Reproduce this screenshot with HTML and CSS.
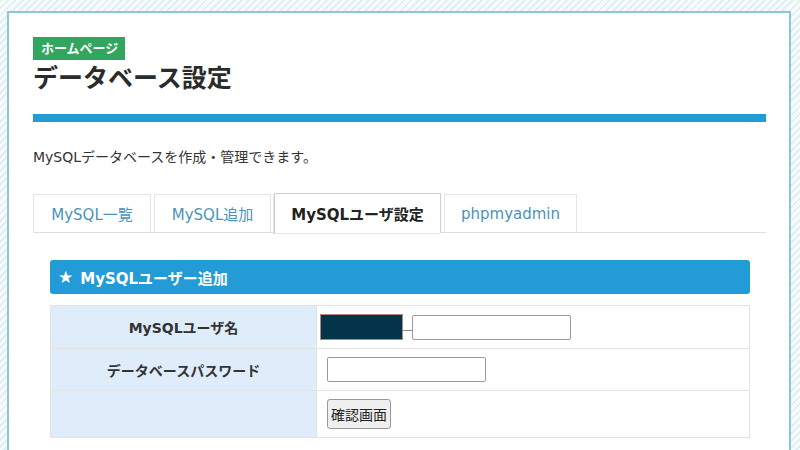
FILE: index.html
```html
<!DOCTYPE html>
<html lang="ja">
<head>
  <meta charset="UTF-8">
  <meta name="viewport" content="width=device-width, initial-scale=1.0">
  <title>データベース設定</title>
  <link rel="stylesheet" href="styles.css">
</head>
<body>
  <div class="page-panel">
    <header class="page-header">
      <span class="crumb-badge">ホームページ</span>
      <h1 class="page-title">データベース設定</h1>
      <div class="title-rule"></div>
    </header>

    <p class="page-lead">MySQLデータベースを作成・管理できます。</p>

    <!-- Tabs -->
    <nav class="tab-bar">
      <a class="tab-item tab-list" href="#">MySQL一覧</a>
      <a class="tab-item tab-add" href="#">MySQL追加</a>
      <a class="tab-item tab-user is-active" href="#">MySQLユーザ設定</a>
      <a class="tab-item tab-pma" href="#">phpmyadmin</a>
    </nav>

    <section class="form-section">
      <h2 class="section-heading"><span class="section-star">★</span>MySQLユーザー追加</h2>

      <table class="form-table">
        <tr class="row-user">
          <th>MySQLユーザ名</th>
          <td>
            <div class="user-field">
              <span class="user-prefix"></span>
              <span class="user-join"></span>
              <input type="text" class="text-input">
            </div>
          </td>
        </tr>
        <tr class="row-pass">
          <th>データベースパスワード</th>
          <td><input type="password" class="text-input pass-input"></td>
        </tr>
        <tr class="row-submit">
          <th></th>
          <td><button type="button" class="confirm-button">確認画面</button></td>
        </tr>
      </table>
    </section>
  </div>
</body>
</html>
```

FILE: styles.css
```css
:root {
  --color-blue: #229bd6;
  --color-green: #32a55e;
  --color-text: #333333;
  --color-link: #4b93b8;
  --color-border: #dddddd;
  --color-label-bg: #deedf9;
  --font-main: "DejaVu Sans", "Noto Sans CJK JP", sans-serif;
}

* {
  box-sizing: border-box;
  margin: 0;
  padding: 0;
}

body {
  font-family: var(--font-main);
  color: var(--color-text);
  height: 450px;
  overflow: hidden;
  padding: 11px 9px 0 7px;
  background-color: #ffffff;
  background-image: repeating-linear-gradient(135deg, #e0eef5 0 2px, #f7fbfd 2px 5px);
}

/* White content panel */
.page-panel {
  background: #ffffff;
  border: 2px solid #8fc6d7;
  border-bottom: none;
  height: 100%;
  padding: 24px 23px 0 24px;
}

/* Header */
.page-header {
  display: flex;
  flex-direction: column;
  align-items: flex-start;
}

.crumb-badge {
  display: inline-block;
  height: 23px;
  line-height: 23px;
  padding: 0 7px 0 8px;
  background: var(--color-green);
  color: #ffffff;
  font-size: 13px;
  font-weight: bold;
}

.page-title {
  margin-top: 2px;
  font-size: 25px;
  line-height: 34px;
  font-weight: bold;
  color: #2b2b2b;
}

.title-rule {
  align-self: stretch;
  height: 8px;
  margin-top: 18px;
  background: var(--color-blue);
}

.page-lead {
  margin-top: 27px;
  font-size: 14px;
  line-height: 16px;
}

/* Tabs */
.tab-bar {
  display: flex;
  align-items: flex-end;
  gap: 3px;
  margin-top: 29px;
  height: 39px;
  border-bottom: 1px solid #e0e0e0;
}

.tab-item {
  display: flex;
  align-items: center;
  justify-content: center;
  height: 38px;
  border: 1px solid #e6e6e6;
  border-bottom: none;
  background: #ffffff;
  color: var(--color-link);
  font-size: 15px;
  text-decoration: none;
}

.tab-list { width: 118px; }
.tab-add { width: 117px; }
.tab-user { width: 167px; }
.tab-pma { width: 133px; }

.tab-item.is-active {
  height: 40px;
  margin-bottom: -1px;
  border-color: #cfcfcf;
  box-shadow: -1px 1px 0 #e4e4e4;
  color: #222222;
  font-weight: bold;
}

/* Form section */
.form-section {
  margin: 27px 16px 0 17px;
}

.section-heading {
  display: flex;
  align-items: center;
  height: 34px;
  padding-left: 8px;
  border-radius: 3px;
  background: var(--color-blue);
  color: #ffffff;
  font-size: 15px;
  font-weight: bold;
}

.section-star {
  margin-right: 7px;
  font-size: 17px;
}

.form-table {
  width: 100%;
  margin-top: 11px;
  border-collapse: collapse;
  font-size: 14px;
}

.form-table th,
.form-table td {
  border: 1px solid #e3e3e3;
}

.form-table th {
  width: 266px;
  background: var(--color-label-bg);
  font-weight: bold;
  color: #333333;
  text-align: center;
}

.form-table td {
  padding: 0 10px;
}

.row-user { height: 43px; }
.row-pass { height: 42px; }
.row-submit { height: 47px; }

.row-user td {
  padding-left: 3px;
}

.user-field {
  display: flex;
  align-items: center;
}

.user-prefix {
  width: 83px;
  height: 26px;
  background: #04344a;
  border: 1px solid #b58580;
}

.user-join {
  width: 9px;
  height: 1px;
  margin-top: 6px;
  background: #8a8a8a;
}

.text-input {
  width: 159px;
  height: 25px;
  border: 1px solid #9a9a9a;
  border-radius: 2px;
  background: #ffffff;
}

.confirm-button {
  height: 30px;
  padding: 0 3px;
  border: 1px solid #999999;
  border-radius: 3px;
  background: #efefef;
  color: #222222;
  font-family: var(--font-main);
  font-size: 14px;
}
```
